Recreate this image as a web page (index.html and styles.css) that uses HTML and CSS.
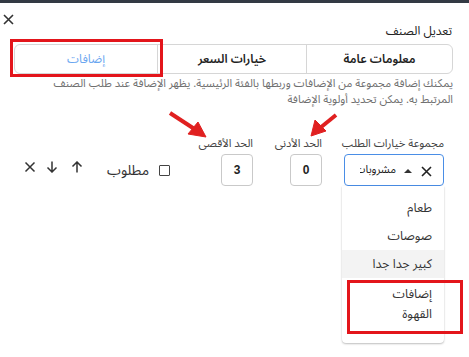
FILE: index.html
```html
<!DOCTYPE html>
<html lang="ar" dir="rtl">
<head>
<meta charset="utf-8">
<link rel="stylesheet" href="styles.css">
</head>
<body>
<div class="topbar"></div>
<div class="modal">
  <div class="header">
    <div class="title">تعديل الصنف</div>
    <button class="close" aria-label="close">
      <svg width="11" height="11" viewBox="0 0 11 11"><path d="M1 1L10 10M10 1L1 10" stroke="#333" stroke-width="1.6" fill="none"/></svg>
    </button>
  </div>
  <div class="tabs">
    <div class="tab">معلومات عامة</div>
    <div class="tab">خيارات السعر</div>
    <div class="tab active">إضافات</div>
    <div class="mark mark-tab"></div>
  </div>
  <p class="desc">يمكنك إضافة مجموعة من الإضافات وربطها بالفئة الرئيسية. يظهر الإضافة عند طلب الصنف المرتبط به. يمكن تحديد أولوية الإضافة</p>

  <div class="row">
    <div class="field field-select">
      <label class="lbl">مجموعة خيارات الطلب</label>
      <div class="select">
        <span class="sel-text">مشروبات</span>
        <span class="caret"></span>
        <svg class="sel-x" width="11" height="11" viewBox="0 0 11 11"><path d="M1 1L10 10M10 1L1 10" stroke="#222" stroke-width="1.6" fill="none"/></svg>
      </div>
      <div class="dropdown">
        <div class="opt">طعام</div>
        <div class="opt">صوصات</div>
        <div class="opt hover">كبير جدا جدا</div>
        <div class="opt wrap">إضافات القهوة</div>
        <div class="mark mark-opt"></div>
      </div>
    </div>
    <div class="field field-min">
      <label class="lbl">الحد الأدنى</label>
      <div class="num">0</div>
    </div>
    <div class="field field-max">
      <label class="lbl">الحد الأقصى</label>
      <div class="num">3</div>
    </div>
    <div class="check">
      <span class="box"></span>
      <span>مطلوب</span>
    </div>
    <div class="actions">
      <svg width="12" height="12" viewBox="0 0 12 12"><path d="M6 11.5V1M1.5 5.5L6 1L10.5 5.5" stroke="#333" stroke-width="1.5" fill="none"/></svg>
      <svg width="12" height="12" viewBox="0 0 12 12"><path d="M6 0.5V11M1.5 6.5L6 11L10.5 6.5" stroke="#333" stroke-width="1.5" fill="none"/></svg>
      <svg width="12" height="12" viewBox="0 0 12 12"><path d="M1.5 1.5L10.5 10.5M10.5 1.5L1.5 10.5" stroke="#333" stroke-width="1.5" fill="none"/></svg>
    </div>
  </div>

  <svg class="arrows" width="469" height="357" viewBox="0 0 469 357">
    <g fill="#e02020" stroke="#e02020">
      <line x1="170" y1="113" x2="196" y2="130" stroke-width="4"/>
      <polygon points="206,137 188,134 198,122" stroke-width="1"/>
      <line x1="336" y1="115" x2="320" y2="128" stroke-width="4"/>
      <polygon points="311,136 315,120 326,131" stroke-width="1"/>
    </g>
  </svg>
</div>
</body>
</html>
```
FILE: styles.css
```css
* { box-sizing: border-box; }
html, body { margin: 0; padding: 0; background: #fff; }
body {
  font-family: "Noto Sans Arabic", "DejaVu Sans", sans-serif;
  color: #222;
  width: 469px;
  height: 357px;
  overflow: hidden;
  position: relative;
}
.topbar { height: 3px; background: #333a44; }
.modal { padding: 0 16px 0 16px; position: relative; }
.header {
  display: flex;
  justify-content: space-between;
  align-items: flex-start;
  height: 38px;
}
.title {
  font-size: 12px;
  margin-top: 16px;
  margin-right: 1px;
  color: #222;
}
.close {
  border: 0;
  background: none;
  padding: 0;
  margin-top: 11px;
  margin-left: -13px;
  width: 11px;
  height: 11px;
  line-height: 0;
}
.tabs {
  position: relative;
  display: grid;
  grid-template-columns: 146px 149px 1fr;
  height: 30px;
  border: 1px solid #d6d6d6;
  border-radius: 6px;
  margin-top: 3px;
  margin-left: -2px;
  margin-right: 0;
}
.tab {
  display: flex;
  align-items: center;
  justify-content: center;
  font-size: 12px;
  font-weight: 600;
  color: #222;
  border-left: 1px solid #d6d6d6;
}
.tab.active { color: #6aa6f0; border-left: 0; font-weight: normal; }
.mark {
  position: absolute;
  border: 3px solid #e3151b;
  pointer-events: none;
}
.mark-tab { left: -5px; top: -6px; width: 153px; height: 38px; }
.desc {
  margin: 2px 0 0 0;
  font-size: 11.2px;
  line-height: 16px;
  color: #707070;
  padding-left: 4px;
}
.row {
  display: flex;
  align-items: flex-start;
  margin-top: 29px;
  margin-right: 9px;
  gap: 22px;
}
.field { display: flex; flex-direction: column; align-items: flex-start; position: relative; }
.lbl { font-size: 11.2px; color: #444; height: 17px; line-height: 14px; white-space: nowrap; }
.field-select { width: 100px; }
.select {
  width: 100px;
  height: 32px;
  border: 1px solid #4a8ee6;
  border-radius: 4px;
  display: flex;
  align-items: center;
  padding: 0 11px 0 0;
  position: relative;
  overflow: hidden;
}
.sel-x { order: 0; margin-top: 3px; }
.caret {
  order: 1;
  width: 0; height: 0;
  border-left: 4px solid transparent;
  border-right: 4px solid transparent;
  border-bottom: 4px solid #333;
  margin-right: 9px;
  margin-top: 1px;
}
.sel-text {
  order: 2;
  font-size: 11px;
  margin-right: 8px;
  white-space: nowrap;
  overflow: hidden;
  max-width: 36px;
  margin-top: -1px;
}
.dropdown {
  position: absolute;
  top: 49px;
  right: 0;
  width: 102px;
  background: #fff;
  border-radius: 0 0 4px 4px;
  box-shadow: 0 1px 2px rgba(0,0,0,0.25), 0 0 1px rgba(0,0,0,0.08);
  padding: 8px 0 19px;
  z-index: 2;
}
.opt {
  font-size: 12.5px;
  color: #333;
  padding: 0 12px;
  height: 28px;
  line-height: 28px;
}
.opt.hover { background: #f3f3f3; }
.opt.wrap { width: 50px; height: auto; line-height: 20px; padding: 6px 12px 0; box-sizing: content-box; }
.mark-opt { right: -19px; top: 94px; width: 116px; height: 54px; }
.field-min { width: 47px; }
.field-max { width: 55px; }
.num {
  width: 32px;
  height: 32px;
  border: 1px solid #c9c9c9;
  border-radius: 4px;
  display: flex;
  align-items: center;
  justify-content: center;
  font-family: "Liberation Sans", Arial, sans-serif;
  font-weight: bold;
  font-size: 12px;
  color: #222;
}
.check {
  display: flex;
  align-items: center;
  gap: 10px;
  font-size: 14px;
  color: #333;
  margin-top: 19px;
  margin-right: 6px;
}
.box { width: 11px; height: 11px; border: 1.5px solid #444; border-radius: 1px; }
.actions {
  display: flex;
  gap: 13px;
  margin-top: 24px;
  margin-right: 2px;
}
.actions svg:nth-child(2) { margin-left: -3px; }
.arrows { position: absolute; left: 0; top: -3px; pointer-events: none; z-index: 3; }
```
